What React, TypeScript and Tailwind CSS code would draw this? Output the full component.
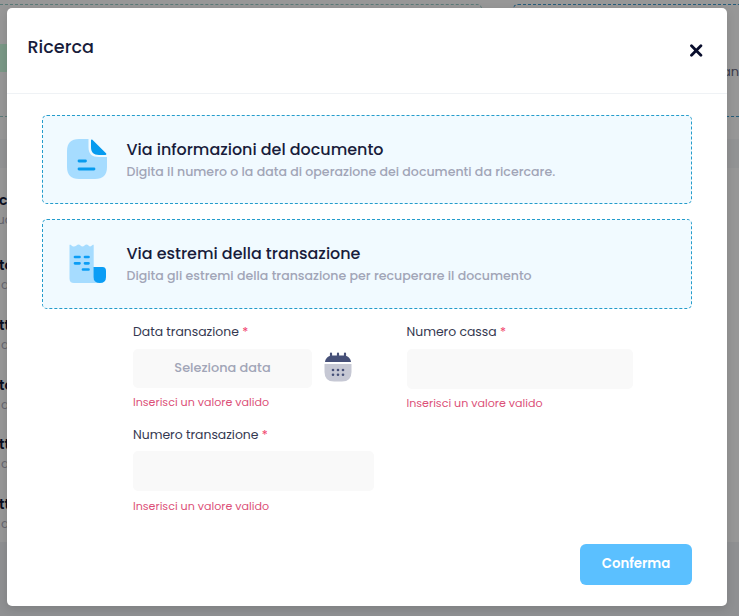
import type { ReactNode } from "react";

const rows = [
  { title: "c", sub: "uc", size: "h-[65px]", shift: "-ml-[3px]" },
  { title: "to", sub: "a", size: "h-[60px]", shift: "ml-px" },
  { title: "tt", sub: "a", size: "h-[60px]", shift: "ml-px" },
  { title: "to", sub: "a", size: "h-[59px]", shift: "ml-px" },
  { title: "tt", sub: "a", size: "h-[60px]", shift: "ml-px" },
  { title: "tt", sub: "a", size: "h-[60px]", shift: "ml-px" },
];

function Backdrop() {
  return (
    <div className="flex h-full flex-col bg-[#979797]">
      <div className="flex h-[117px] justify-between pt-[4px]">
        <div className="h-[113px] w-[482px] rounded-tr-[5px] border border-l-0 border-dashed border-[#5a7a78] pt-[39px]">
          <div className="h-[28px] w-[40px] bg-[#7a9886]" />
        </div>
        <div className="h-[113px] w-[226px] rounded-tl-[5px] border border-r-0 border-dashed border-[#245c7a] pt-[58px] text-right text-[13px] leading-[18px] text-[#3c3d4c]">
          an
        </div>
      </div>
      <div className="mt-[22px] h-[29px] bg-[#929394]" />
      <div className="h-[374px] pt-[22px]">
        {rows.map((r, i) => (
          <div key={i} className={`flex flex-col whitespace-nowrap ${r.size}`}>
            <span className="-ml-px text-[14px] leading-[20px] font-semibold text-[#0b0e20]">{r.title}</span>
            <span className={`text-[12px] leading-[20px] text-[#65666f] ${r.shift}`}>{r.sub}</span>
          </div>
        ))}
      </div>
      <div className="flex-1 bg-[#8f9092]" />
    </div>
  );
}

function DocumentIcon() {
  return (
    <svg className="mb-[2px] h-[40px] w-[40px]" viewBox="0 0 40 40">
      <path d="M21.500 0H12C4 0 0 4 0 12V28C0 36 4 40 12 40H28C36 40 40 36 40 28V18H32C25 18 21.500 15 21.500 8Z" fill="#a6dcff" />
      <path d="M24 1.300C24 .4 24.800.1 25.400.8L39 14.200C39.700 15 39.300 15.900 38.400 15.900H32C26.500 15.900 24 13.400 24 8Z" fill="#079bef" />
      <path d="M12 22H18.500M12 30H27" stroke="#079bef" strokeWidth="2.800" strokeLinecap="round" />
    </svg>
  );
}

function ReceiptIcon() {
  return (
    <svg className="h-[40px] w-[40px]" viewBox="0 0 40 40">
      <path d="M2.500 1C2.500.6 3.500.6 4 1C6 3 7.500 3 9.500 1.500Q11.500-.5 13.500 1.500Q15.500 3.500 17.500 1.500Q19.500-.5 21.500 1.500C23 3 24 2.500 25.500 1C26 .6 26.700.6 26.700 1V33Q26.700 37 30 39H7Q2.500 39 2.500 34.500Z" fill="#a6dcff" />
      <path d="M26.500 23H35.500Q39 23 39 27V33Q39 39 32.800 39Q26.500 39 26.500 33Z" fill="#0b9df5" />
      <path d="M8 13H12.500M18 13H21.500M8 19.300H12.500M18 19.300H21.500M16 25.500H21.500" stroke="#0b9df5" strokeWidth="2.700" strokeLinecap="round" />
    </svg>
  );
}

function CalendarIcon() {
  return (
    <svg className="h-[30px] w-[28px]" viewBox="0 0 28 30">
      <path d="M.5 12H27.500V20Q27.500 29.500 18 29.500H10Q.5 29.500.5 20Z" fill="#c6c8d4" />
      <path d="M1 10C1.500 6 4.500 3.500 8.500 3.500H19.500C23.500 3.500 26.500 6 27 10Z" fill="#465078" />
      <path d="M7 1.500V5M14 1.500V5M21 1.500V5" stroke="#465078" strokeWidth="2.200" strokeLinecap="round" />
      <g fill="#465078">
        <circle cx="9" cy="18" r="1.300" /><circle cx="14" cy="18" r="1.300" /><circle cx="19" cy="18" r="1.300" />
        <circle cx="9" cy="22.700" r="1.300" /><circle cx="14" cy="22.700" r="1.300" /><circle cx="19" cy="22.700" r="1.300" />
      </g>
    </svg>
  );
}

function OptionCard({ icon, title, text }: { icon: ReactNode; title: string; text: string }) {
  return (
    <div className="flex items-center rounded-[5px] border border-dashed border-[#249ccb] bg-[#f1faff] pl-[24px]">
      {icon}
      <div className="ml-[19.500px] whitespace-nowrap">
        <div className="text-[15.950px] leading-[24px] font-medium text-[#181c3b]">{title}</div>
        <div className="text-[12.580px] leading-[20px] font-medium text-[#a1a5b7]">{text}</div>
      </div>
    </div>
  );
}

function Label({ children }: { children: ReactNode }) {
  return (
    <div className="h-[20px] text-[12.400px] leading-[20px] whitespace-nowrap text-[#343850]">
      {children} <span className="text-[#f1416c]">*</span>
    </div>
  );
}

function ErrorText() {
  return <div className="text-[11.100px] leading-[18px] whitespace-nowrap text-[#dc5078]">Inserisci un valore valido</div>;
}

export default function App() {
  return (
    <div className="relative h-[616px] w-[739px] overflow-hidden font-[Poppins,Inter,sans-serif]">
      <Backdrop />
      <div className="absolute top-[8px] left-[7px] flex h-[598px] w-[720px] flex-col rounded-[5px] bg-white shadow-[0_3px_10px_rgba(0,0,0,0.12)]">
        <header className="flex h-[86px] items-start justify-between border-b border-[#eff2f5] pr-[24px] pl-[20.500px]">
          <h1 className="mt-[27px] text-[17.600px] leading-[24px] font-medium text-[#181c3b]">Ricerca</h1>
          <svg className="mt-[36px] h-[13px] w-[14px]" viewBox="0 0 14 13">
            <path d="M2.500 1.800L11.900 11.200M11.900 1.800L2.500 11.200" stroke="#080d2c" strokeWidth="2.800" strokeLinecap="round" />
          </svg>
        </header>
        <div className="mx-[35px] mt-[21px] grid grid-rows-[89px_90px] gap-[15px]">
          <OptionCard icon={<DocumentIcon />} title="Via informazioni del documento" text="Digita il numero o la data di operazione dei documenti da ricercare." />
          <OptionCard icon={<ReceiptIcon />} title="Via estremi della transazione" text="Digita gli estremi della transazione per recuperare il documento" />
        </div>
        <div className="mt-[13px] ml-[126px] grid grid-cols-[273.500px_226.500px] grid-rows-[103px_auto]">
          <div>
            <Label>Data transazione</Label>
            <div className="mt-[6.500px] flex items-start">
              <div className="flex h-[39px] w-[179px] items-center justify-center rounded-[5px] bg-[#f9f9f9] pb-px text-[12.900px] font-medium text-[#a1a5b7]">Seleziona data</div>
              <div className="mt-[3.500px] ml-[12px]"><CalendarIcon /></div>
            </div>
            <div className="mt-[5px]"><ErrorText /></div>
          </div>
          <div>
            <Label>Numero cassa</Label>
            <div className="mt-[6.500px] mb-[5.500px] h-[40px] rounded-[5px] bg-[#f9f9f9]" />
            <ErrorText />
          </div>
          <div>
            <Label>Numero transazione</Label>
            <div className="mt-[6.400px] mb-[5.600px] h-[40px] w-[241px] rounded-[5px] bg-[#f9f9f9]" />
            <ErrorText />
          </div>
        </div>
        <button className="mt-auto mr-[35px] mb-[21px] h-[41px] w-[112px] self-end rounded-[6px] bg-[#5bc0ff] pb-[2px] text-[13.300px] font-semibold text-white">Conferma</button>
      </div>
    </div>
  );
}
